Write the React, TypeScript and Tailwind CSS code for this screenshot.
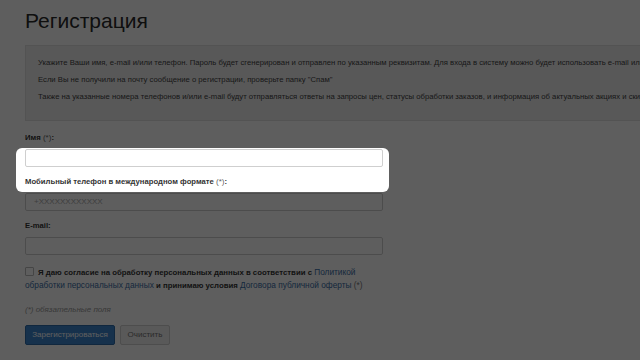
import React from "react";

function Field({ label, required, placeholder }: { label: string; required?: boolean; placeholder?: string }) {
  return (
    <div className="mb-[9px]">
      <div className="h-[12px] leading-[12px] text-[7.7px] font-bold text-[#333] mb-[5px]">
        {label}
        {required && <span className="font-normal text-[8px] text-[#666]"> (*)</span>}:
      </div>
      <div className="w-[358px] h-[18px] border border-[#cfcfcf] rounded-[2px] bg-white flex items-center pl-[8px] text-[8px] text-[#aaa]">
        {placeholder}
      </div>
    </div>
  );
}

export default function App() {
  return (
    <div className="relative w-[640px] h-[360px] overflow-hidden bg-white font-['Liberation_Sans',Arial,sans-serif] text-[#333]">
      <div className="pl-[25px] pt-[8px]">
        <h1 className="text-[21px] leading-[26px] font-normal text-[#2a2a2a]">Регистрация</h1>
        <div className="mt-[11px] w-[700px] h-[76px] border border-[#e0e0e0] bg-[#efefef] pl-[12px] pt-[12px] text-[7.7px] leading-[10px] text-[#444] whitespace-nowrap">
          <p className="mb-[7px]">
            Укажите Ваши имя, e-mail и/или телефон. Пароль будет сгенерирован и отправлен по указанным реквизитам. Для входа в систему можно будет использовать e-mail или телефон.
          </p>
          <p className="mb-[7px]">Если Вы не получили на почту сообщение о регистрации, проверьте папку "Спам"</p>
          <p>
            Также на указанные номера телефонов и/или e-mail будут отправляться ответы на запросы цен, статусы обработки заказов, и информация об актуальных акциях и скидках.
          </p>
        </div>
        <div className="mt-[11px]">
          <Field label="Имя" required />
          <Field label="Мобильный телефон в международном формате" required placeholder="+XXXXXXXXXXXX" />
          <Field label="E-mail" />
        </div>
        <div className="mt-[11px] w-[358px] text-[7.8px] leading-[12px] font-bold text-[#333]">
          <span className="inline-block align-[-1px] w-[9px] h-[9px] border border-[#bbb] rounded-[1px] bg-white mr-[4px]" />
          Я даю согласие на обработку персональных данных в соответствии с{" "}
          <span className="font-normal text-[8.3px] text-[#3a6ea5]">Политикой обработки персональных данных</span> и принимаю условия{" "}
          <span className="font-normal text-[8.3px] text-[#3a6ea5]">Договора публичной оферты</span>{" "}
          <span className="font-normal text-[8.3px] text-[#777]">(*)</span>
        </div>
        <div className="mt-[12px] text-[8px] leading-[12px] italic text-[#999]">(*) обязательные поля</div>
        <div className="mt-[9px] flex gap-[5px]">
          <div className="w-[90px] h-[20px] rounded-[2px] bg-[#3d86cf] border border-[#2c6aa8] flex items-center justify-center text-[8px] text-white">
            Зарегистрироваться
          </div>
          <div className="w-[50px] h-[20px] rounded-[2px] bg-[#f0f0f0] border border-[#d0d0d0] flex items-center justify-center text-[8px] text-[#777]">
            Очистить
          </div>
        </div>
      </div>
      <div className="absolute left-[16px] top-[148px] w-[373px] h-[44px] rounded-[6px] shadow-[0_0_0_9999px_rgba(0,0,0,0.63)] pointer-events-none" />
    </div>
  );
}
